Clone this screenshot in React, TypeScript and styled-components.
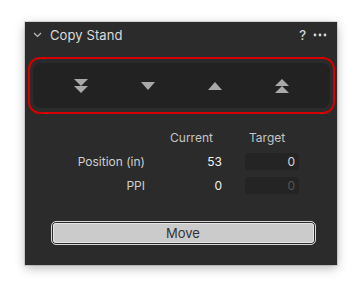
import React from 'react'
import styled, { createGlobalStyle } from 'styled-components'

const Global = createGlobalStyle`
	html, body {
		margin: 0;
		padding: 0;
		background: #ffffff;
	}
	body {
		font-family: Inter, "Noto Sans", "Liberation Sans", sans-serif;
		-webkit-font-smoothing: antialiased;
	}
`

const Page = styled.div`
	width: 364px;
	height: 289px;
	padding: 22px 0 0 25px;
	box-sizing: border-box;
`

const Panel = styled.section`
	width: 312px;
	height: 243px;
	box-sizing: border-box;
	background: #2b2b2b;
	box-shadow: 0 3px 10px rgba(0, 0, 0, 0.28), 0 0 0 1px rgba(0, 0, 0, 0.12);
	display: flex;
	flex-direction: column;
	padding: 0 2px 0 3px;
`

const Header = styled.header`
	height: 25px;
	display: flex;
	align-items: center;
	padding: 0 8px 0 5px;
	color: #dcdcdc;
`

const Title = styled.h2`
	margin: 0 0 0 8px;
	font-size: 13px;
	font-weight: 400;
	letter-spacing: 0.1px;
	flex: 1;
`

const HeaderTools = styled.div`
	display: flex;
	align-items: center;
	gap: 7px;
	font-size: 13px;
	font-weight: 500;
	color: #d8d8d8;
`

const Highlight = styled.div`
	margin-top: 10px;
	border: 2px solid #d40000;
	border-radius: 12px;
	padding: 4px 3px;
`

const ArrowBar = styled.div`
	height: 45px;
	border-radius: 8px;
	background: #222222;
	display: grid;
	grid-template-columns: repeat(4, 67px);
	justify-content: center;
	align-items: center;
`

const ArrowButton = styled.button`
	background: none;
	border: none;
	padding: 0;
	height: 100%;
	display: flex;
	align-items: center;
	justify-content: center;
	color: #a9a9a9;
`

const Table = styled.div`
	margin: 11px 0 0 -3px;
	display: grid;
	grid-template-columns: 120px 61px 61px;
	grid-auto-rows: 24px;
	column-gap: 16px;
	align-items: center;
	font-size: 12px;
`

const ColHead = styled.div<{ $target?: boolean }>`
	color: #c6c6c6;
	text-align: ${p => (p.$target ? 'left' : 'center')};
	padding-left: ${p => (p.$target ? '11px' : '0')};
`

const Label = styled.div`
	color: #cfcfcf;
	text-align: right;
`

const Value = styled.div`
	color: #f2f2f2;
	text-align: right;
`

const TargetInput = styled.div<{ $disabled?: boolean }>`
	margin-left: 7px;
	height: 17px;
	border-radius: 4px;
	background: #242424;
	color: ${p => (p.$disabled ? '#555555' : '#d6d6d6')};
	text-align: right;
	padding-right: 4px;
	line-height: 17px;
	font-size: 12px;
`

const Footer = styled.div`
	margin-top: 24px;
	display: flex;
	justify-content: center;
	padding-left: 3px;
`

const MoveButton = styled.button`
	width: 265px;
	height: 24px;
	box-sizing: border-box;
	border-radius: 5px;
	border: 1px solid #d6d6d6;
	box-shadow: inset 0 0 0 1px #2b2b2b;
	background: #cbcbcb;
	background-clip: padding-box;
	padding: 0;
	font-family: inherit;
	font-size: 13px;
	color: #333333;
	position: relative;
	&::after {
		content: '';
		position: absolute;
		inset: 1px;
		border: 1px solid #e4e4e4;
		border-radius: 3px;
		pointer-events: none;
	}
`

const Chevron = () => (
	<svg width="9" height="6" viewBox="0 0 9 6">
		<path d="M1 1 L4.5 4.5 L8 1" fill="none" stroke="#bdbdbd" strokeWidth="1.2" />
	</svg>
)

const Dots = () => (
	<svg width="14" height="4" viewBox="0 0 14 4">
		<circle cx="2" cy="2" r="1.4" fill="#d8d8d8" />
		<circle cx="7" cy="2" r="1.4" fill="#d8d8d8" />
		<circle cx="12" cy="2" r="1.4" fill="#d8d8d8" />
	</svg>
)

type Dir = 'down2' | 'down' | 'up' | 'up2'

const Arrow: React.FC<{ dir: Dir }> = ({ dir }) => {
	const shapes: Record<Dir, string[]> = {
		down2: ['M0 1 L14 1 L7 8 Z', 'M0 8 L14 8 L7 15 Z'],
		down: ['M0 4 L14 4 L7 12 Z'],
		up: ['M0 12 L14 12 L7 4 Z'],
		up2: ['M0 8 L14 8 L7 1 Z', 'M0 15 L14 15 L7 8 Z'],
	}
	return (
		<svg width="14" height="16" viewBox="0 0 14 16">
			{shapes[dir].map(d => <path key={d} d={d} fill="currentColor" />)}
		</svg>
	)
}

const rows = [
	{ label: 'Position (in)', current: '53', target: '0', disabled: false },
	{ label: 'PPI', current: '0', target: '0', disabled: true },
]

const App = () => {
	return (
		<Page>
			<Global />
			<Panel>
				<Header>
					<Chevron />
					<Title>Copy Stand</Title>
					<HeaderTools><span>?</span><Dots /></HeaderTools>
				</Header>
				<Highlight>
					<ArrowBar>
						{(['down2', 'down', 'up', 'up2'] as Dir[]).map(d => (
							<ArrowButton key={d}><Arrow dir={d} /></ArrowButton>
						))}
					</ArrowBar>
				</Highlight>
				<Table>
					<div />
					<ColHead>Current</ColHead>
					<ColHead $target>Target</ColHead>
					{rows.map(r => (
						<React.Fragment key={r.label}>
							<Label>{r.label}</Label>
							<Value>{r.current}</Value>
							<TargetInput $disabled={r.disabled}>{r.target}</TargetInput>
						</React.Fragment>
					))}
				</Table>
				<Footer>
					<MoveButton>Move</MoveButton>
				</Footer>
			</Panel>
		</Page>
	)
}

export default App
